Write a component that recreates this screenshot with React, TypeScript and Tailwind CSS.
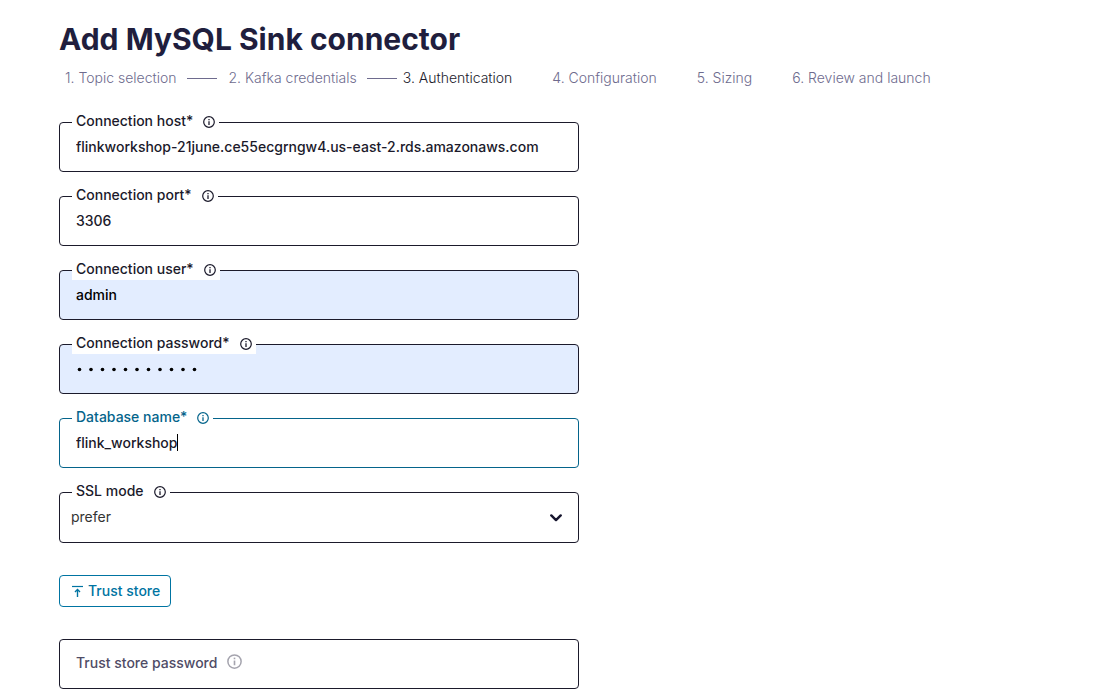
import { useState } from "react";

function InfoIcon({ className }: { className: string }) {
  return (
    <svg viewBox="0 0 24 24" fill="none" stroke="currentColor" className={className} aria-hidden="true">
      <circle cx="12" cy="12" r="10.6" strokeWidth="2.4" />
      <path d="M12 10.5v7.5" strokeWidth="2.6" />
      <path d="M12 5.8v2.6" strokeWidth="2.6" />
    </svg>
  );
}

type Step = { label: string; state: "done" | "current" | "todo" };

const steps: Step[] = [
  { label: "1. Topic selection", state: "done" },
  { label: "2. Kafka credentials", state: "done" },
  { label: "3. Authentication", state: "current" },
  { label: "4. Configuration", state: "todo" },
  { label: "5. Sizing", state: "todo" },
  { label: "6. Review and launch", state: "todo" },
];

const stepStyles = {
  done: "pl-1.5 text-[#6e6b8e]",
  current: "text-[#1b1a2b]",
  todo: "text-[#6e6b8e]",
};

function Stepper() {
  return (
    <nav aria-label="Progress">
      <ol className="flex items-center text-sm leading-5 font-light whitespace-nowrap">
        {steps.map((step) => (
          <li
            key={step.label}
            aria-current={step.state === "current" ? "step" : undefined}
            className={`flex items-center ${stepStyles[step.state]}`}
          >
            {step.label}
            {step.state === "done" ? (
              <span className="mr-1.5 ml-2.5 h-px w-[30px] bg-[#6e6b8e]" />
            ) : (
              <span className="w-10" />
            )}
          </li>
        ))}
      </ol>
    </nav>
  );
}

function FloatingLabel({ htmlFor, text, tone }: { htmlFor: string; text: string; tone: string }) {
  return (
    <label
      htmlFor={htmlFor}
      className={`absolute -top-[11px] left-[13px] flex h-[21px] items-center gap-2.5 bg-white px-1 pb-px text-sm leading-5 font-medium whitespace-nowrap ${tone}`}
    >
      {text}
      <InfoIcon className="mt-0.5 size-3" />
    </label>
  );
}

function MaskDots({ count }: { count: number }) {
  return (
    <svg
      className="pointer-events-none absolute top-[21px] left-[17px] h-2 w-[calc(100%-34px)] text-black"
      fill="currentColor"
      aria-hidden="true"
    >
      {Array.from({ length: count }, (_, i) => (
        <circle key={i} cx={3.5 + i * 11.5} cy="4.5" r="1.8" />
      ))}
    </svg>
  );
}

type FieldProps = {
  id: string;
  label: string;
  initial: string;
  type?: "text" | "password";
  autofilled?: boolean;
  active?: boolean;
};

function Field({ id, label, initial, type = "text", autofilled, active }: FieldProps) {
  const [value, setValue] = useState(initial);
  const masked = type === "password";
  const textTone = masked ? "text-transparent" : autofilled ? "text-black" : "text-[#1b1a2b]";
  return (
    <div className="relative">
      <input
        id={id}
        type={type}
        value={value}
        onChange={(e) => setValue(e.target.value)}
        className={`block h-[50px] w-full rounded border px-4 pb-0.5 text-sm font-medium outline-none ${textTone} ${
          active ? "border-[#04648b]" : "border-[#1b1a2b]"
        } ${autofilled ? "bg-[#e3edff]" : "bg-white"}`}
      />
      {masked && <MaskDots count={value.length} />}
      <FloatingLabel htmlFor={id} text={label} tone={active ? "text-[#04648b]" : "text-[#1b1a2b]"} />
      {active && <span className="absolute top-4 left-[118px] h-[17px] w-px bg-black" />}
    </div>
  );
}

export default function App() {
  const [mode, setMode] = useState("prefer");
  return (
    <main className="bg-white px-[59px] pt-[19px] font-['Inter',sans-serif]">
      <h1 className="text-3xl leading-10 font-bold text-[#201e3d]">Add MySQL Sink connector</h1>
      <div className="mt-[9px]">
        <Stepper />
      </div>
      <form className="mt-[34px] flex max-w-[520px] flex-col" onSubmit={(e) => e.preventDefault()}>
        <div className="flex flex-col gap-6">
          <Field id="host" label="Connection host*" initial="flinkworkshop-21june.ce55ecgrngw4.us-east-2.rds.amazonaws.com" />
          <Field id="port" label="Connection port*" initial="3306" />
          <Field id="user" label="Connection user*" initial="admin" autofilled />
          <Field id="password" label="Connection password*" initial="workshop123" type="password" autofilled />
          <Field id="database" label="Database name*" initial="flink_workshop" active />
          <div className="relative">
            <select
              id="ssl"
              value={mode}
              onChange={(e) => setMode(e.target.value)}
              className="block h-[51px] w-full appearance-none rounded border border-[#1b1a2b] bg-white px-[11px] pb-0.5 text-sm text-[#333333] outline-none"
            >
              <option>prefer</option>
            </select>
            <FloatingLabel htmlFor="ssl" text="SSL mode" tone="text-[#1b1a2b]" />
            <svg
              viewBox="0 0 12 8"
              fill="none"
              stroke="#16152e"
              strokeWidth="2.4"
              strokeLinecap="round"
              strokeLinejoin="round"
              className="pointer-events-none absolute top-[22px] right-[17px] h-2 w-3"
              aria-hidden="true"
            >
              <path d="M1.3 1.4 6 6.1l4.7-4.7" />
            </svg>
          </div>
        </div>
        <button
          type="button"
          className="mt-8 flex h-8 items-center gap-1 self-start rounded border border-[#0074a2] bg-white pr-2.5 pl-[11px] text-sm font-medium text-[#0074a2]"
        >
          <svg viewBox="0 0 13 14" fill="none" stroke="currentColor" className="h-3.5 w-[13px]" aria-hidden="true">
            <path d="M1 2.5h11" strokeWidth="1.2" />
            <path d="M6.5 13V6" strokeWidth="1.4" />
            <path d="M4 8l2.5-2.5L9 8" strokeWidth="1.4" />
          </svg>
          Trust store
        </button>
        <div className="relative mt-8">
          <input
            id="trust"
            type="password"
            className="block h-[50px] w-full rounded border border-[#1b1a2b] bg-white px-4 text-sm outline-none"
          />
          <label
            htmlFor="trust"
            className="absolute top-3.5 left-[17px] flex items-center gap-2.5 text-sm leading-5 font-medium text-[#4f4c66]"
          >
            Trust store password
            <InfoIcon className="mb-1 size-[15px] text-[#a5a4ae]" />
          </label>
        </div>
      </form>
    </main>
  );
}
